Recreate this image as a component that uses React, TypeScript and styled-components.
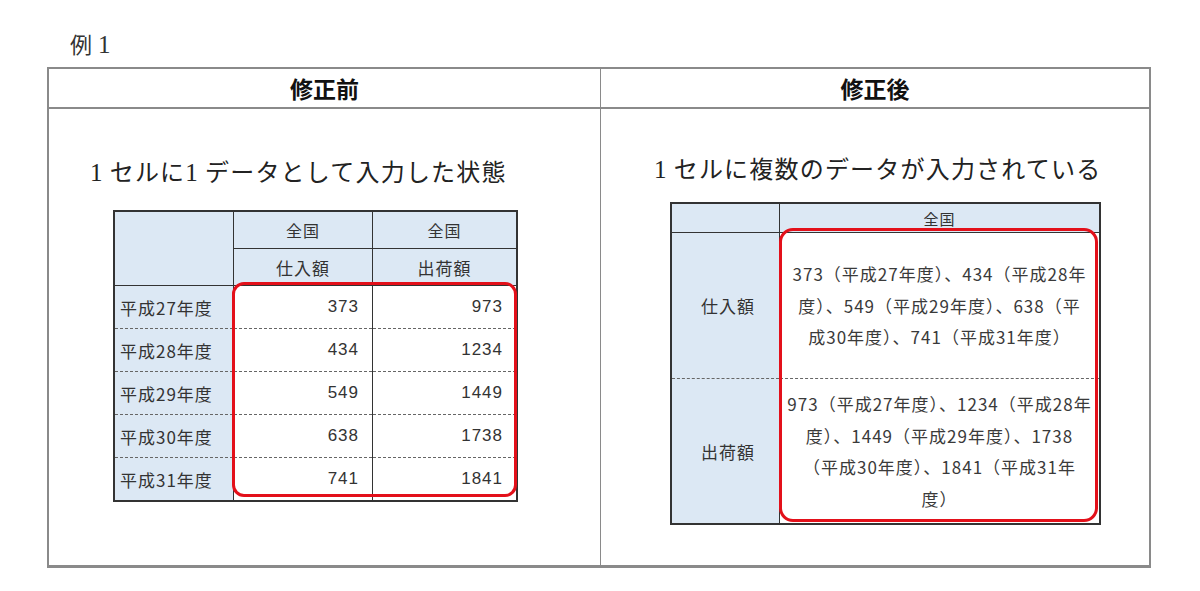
import React from "react";
import styled, { createGlobalStyle } from "styled-components";

const Global = createGlobalStyle`
  html, body { margin: 0; padding: 0; background: #fff; }
  body { font-family: "Liberation Serif", "Noto Sans CJK JP", serif; color: #222; }
`;

const Page = styled.div`
  width: 1200px;
  height: 591px;
  overflow: hidden;
`;

const Caption = styled.div`
  padding: 33px 0 0 70px;
  height: 24px;
  margin-bottom: 10px;
  font-size: 22px;
  line-height: 24px;
  color: #333;
`;

const CaptionNum = styled.span`
  font-family: "Liberation Serif", serif;
  font-size: 25px;
  margin-left: 6px;
`;

const Frame = styled.div`
  margin-left: 47px;
  width: 1104px;
  box-sizing: border-box;
  display: grid;
  grid-template-columns: 552px 1fr;
  grid-template-rows: 40px 456px;
  border: 2px solid #8a8a8a;
  border-bottom-width: 3px;
`;

const HeadCell = styled.div<{ $first?: boolean }>`
  display: flex;
  align-items: center;
  justify-content: center;
  border-bottom: 2px solid #8a8a8a;
  border-right: ${(p) => (p.$first ? "1px solid #8a8a8a" : "none")};
  font-family: "Noto Sans CJK JP", sans-serif;
  font-weight: 700;
  font-size: 23px;
  color: #111;
`;

const BodyCell = styled.div<{ $first?: boolean; $pt: number; $pl: number }>`
  border-right: ${(p) => (p.$first ? "1px solid #8a8a8a" : "none")};
  padding-top: ${(p) => p.$pt}px;
  padding-left: ${(p) => p.$pl}px;
  display: flex;
  flex-direction: column;
  align-items: flex-start;
`;

const Subtitle = styled.div<{ $mb: number }>`
  font-family: "Liberation Serif", "Noto Sans CJK JP", serif;
  font-size: 24px;
  line-height: 30px;
  letter-spacing: 1.2px;
  color: #222;
  margin-bottom: ${(p) => p.$mb}px;
  white-space: nowrap;
`;

const Digit = styled.span`
  font-family: "Liberation Serif", serif;
  font-size: 25px;
  margin-right: 6px;
`;

const TableWrap = styled.div<{ $ml: number }>`
  position: relative;
  margin-left: ${(p) => p.$ml}px;
`;

const Table = styled.table`
  border-collapse: collapse;
  table-layout: fixed;
  font-family: "Noto Sans CJK JP", "Liberation Sans", sans-serif;
  color: #333;
  border: 2px solid #333;
`;

const Th = styled.th<{ $w?: number; $h: number; $size?: number }>`
  width: ${(p) => (p.$w ? `${p.$w}px` : "auto")};
  height: ${(p) => p.$h}px;
  padding: 0;
  background: #dce8f4;
  border: 1px solid #333;
  font-weight: 400;
  font-size: ${(p) => p.$size ?? 16}px;
  letter-spacing: 1px;
  text-align: center;
  vertical-align: middle;
`;

const RowLabel = styled.td<{ $h: number; $dashed?: boolean; $center?: boolean }>`
  height: ${(p) => p.$h}px;
  padding: 0 0 0 5px;
  background: #dce8f4;
  border-left: 1px solid #333;
  border-right: 1px solid #333;
  border-top: ${(p) => (p.$dashed ? "1px dashed #666" : "1px solid #333")};
  font-size: 17px;
  letter-spacing: 1px;
  text-align: ${(p) => (p.$center ? "center" : "left")};
  vertical-align: middle;
`;

const NumCell = styled.td<{ $dashed?: boolean }>`
  padding: 0 13px 0 0;
  background: #fff;
  border-left: 1px solid #333;
  border-right: 1px solid #333;
  border-top: ${(p) => (p.$dashed ? "1px dashed #666" : "1px solid #333")};
  font-family: "Liberation Sans", sans-serif;
  font-size: 17px;
  letter-spacing: 1px;
  text-align: right;
  vertical-align: middle;
`;

const TextCell = styled.td<{ $dashed?: boolean }>`
  padding: 0;
  background: #fff;
  border-left: 1px solid #333;
  border-right: 1px solid #333;
  border-top: ${(p) => (p.$dashed ? "1px dashed #666" : "1px solid #333")};
  font-size: 17px;
  line-height: 31.5px;
  letter-spacing: 1px;
  text-align: center;
  vertical-align: middle;
  white-space: nowrap;
  color: #3a3a3a;
`;

const RedBox = styled.div<{ $l: number; $t: number; $w: number; $h: number; $r: number }>`
  position: absolute;
  left: ${(p) => p.$l}px;
  top: ${(p) => p.$t}px;
  width: ${(p) => p.$w}px;
  height: ${(p) => p.$h}px;
  box-sizing: border-box;
  border: 3px solid #e3101a;
  border-radius: ${(p) => p.$r}px;
  pointer-events: none;
`;

const rows = [
  { label: "平成27年度", a: "373", b: "973" },
  { label: "平成28年度", a: "434", b: "1234" },
  { label: "平成29年度", a: "549", b: "1449" },
  { label: "平成30年度", a: "638", b: "1738" },
  { label: "平成31年度", a: "741", b: "1841" },
];

const BeforeTable = () => (
  <TableWrap $ml={23}>
    <Table>
      <tbody>
        <tr>
          <Th $w={118} $h={36} rowSpan={2} />
          <Th $w={138} $h={36}>全国</Th>
          <Th $w={143} $h={36}>全国</Th>
        </tr>
        <tr>
          <Th $h={36} $size={17}>仕入額</Th>
          <Th $h={36} $size={17}>出荷額</Th>
        </tr>
        {rows.map((r, i) => (
          <tr key={r.label}>
            <RowLabel $h={42} $dashed={i > 0}>{r.label}</RowLabel>
            <NumCell $dashed={i > 0}>{r.a}</NumCell>
            <NumCell $dashed={i > 0}>{r.b}</NumCell>
          </tr>
        ))}
      </tbody>
    </Table>
    <RedBox $l={119} $t={72} $w={285} $h={215} $r={12} />
  </TableWrap>
);

const AfterTable = () => (
  <TableWrap $ml={16}>
    <Table>
      <tbody>
        <tr>
          <Th $w={107} $h={28} />
          <Th $w={319} $h={28} $size={15}>全国</Th>
        </tr>
        <tr>
          <RowLabel $h={145} $center>仕入額</RowLabel>
          <TextCell>
            373（平成27年度）、434（平成28年
            <br />
            度）、549（平成29年度）、638（平
            <br />
            成30年度）、741（平成31年度）
          </TextCell>
        </tr>
        <tr>
          <RowLabel $h={144} $dashed $center>出荷額</RowLabel>
          <TextCell $dashed>
            973（平成27年度）、1234（平成28年
            <br />
            度）、1449（平成29年度）、1738
            <br />
            （平成30年度）、1841（平成31年
            <br />
            度）
          </TextCell>
        </tr>
      </tbody>
    </Table>
    <RedBox $l={109} $t={26} $w={319} $h={294} $r={14} />
  </TableWrap>
);

export default function App() {
  return (
    <Page>
      <Global />
      <Caption>
        例<CaptionNum>1</CaptionNum>
      </Caption>
      <Frame>
        <HeadCell $first>修正前</HeadCell>
        <HeadCell>修正後</HeadCell>
        <BodyCell $first $pt={49} $pl={41}>
          <Subtitle $mb={22}>
            <Digit>1</Digit>セルに<Digit>1</Digit>データとして入力した状態
          </Subtitle>
          <BeforeTable />
        </BodyCell>
        <BodyCell $pt={46} $pl={53}>
          <Subtitle $mb={17}>
            <Digit>1</Digit>セルに複数のデータが入力されている
          </Subtitle>
          <AfterTable />
        </BodyCell>
      </Frame>
    </Page>
  );
}
